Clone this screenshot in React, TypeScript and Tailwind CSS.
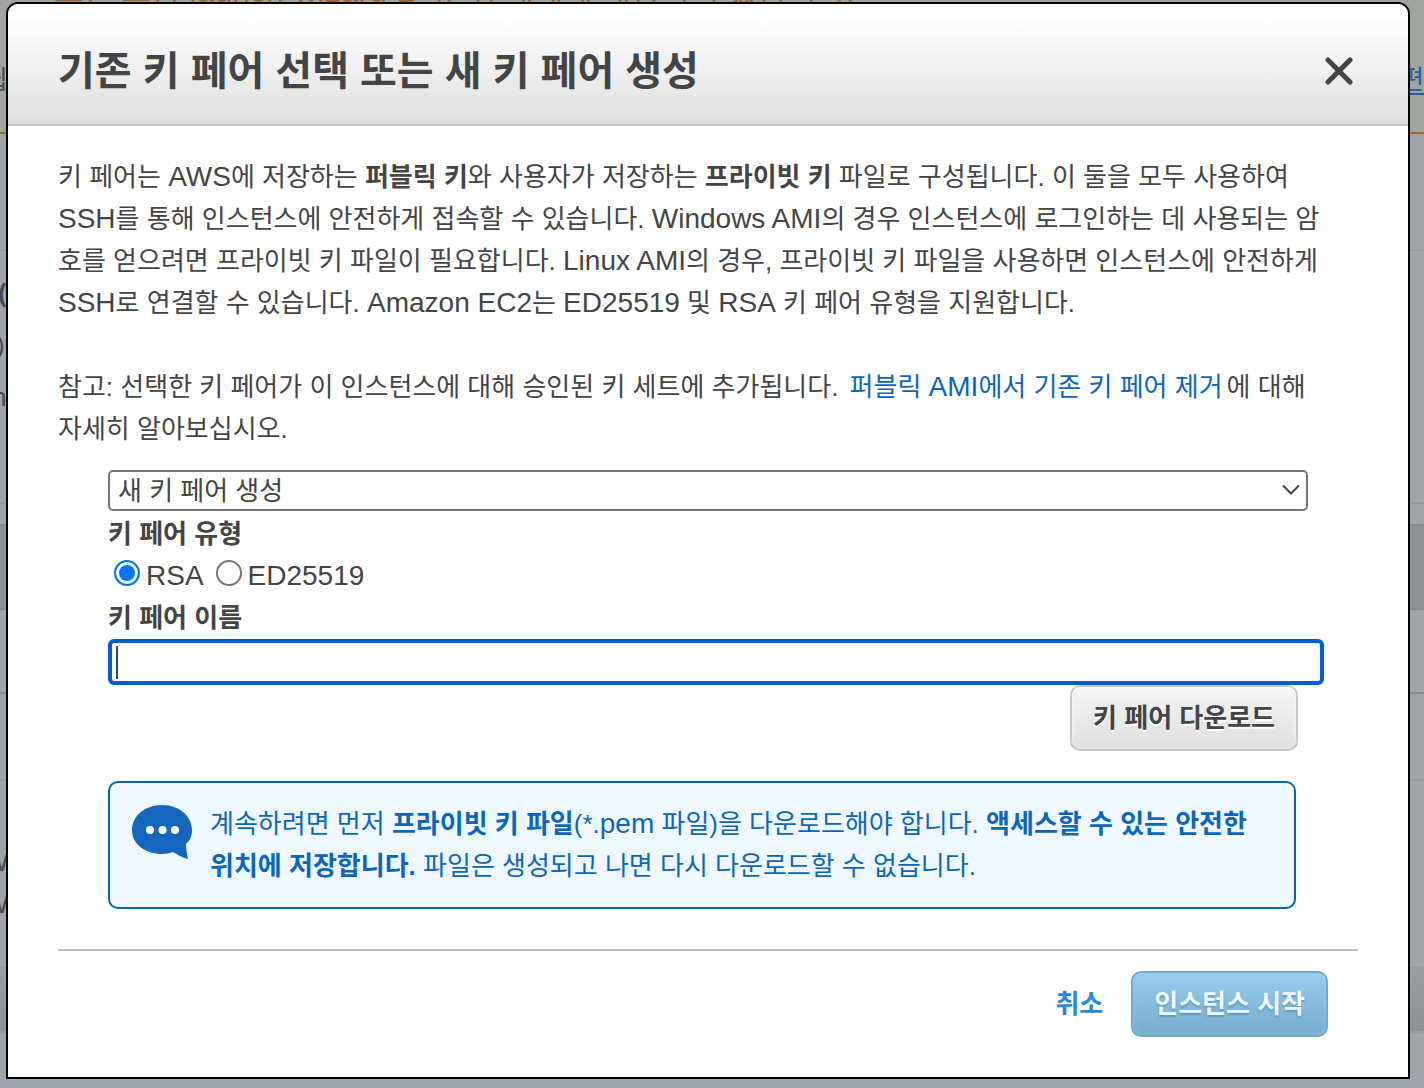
import { useState, FormEvent, ReactNode } from "react";

/* ─── Types ───────────────────────────────────────────────────────────────── */
type KeyType = "RSA" | "ED25519";

/* ─── Static data ─────────────────────────────────────────────────────────── */
const KEY_TYPES: KeyType[] = ["RSA", "ED25519"];

const KEY_OPTIONS = ["새 키 페어 생성", "기존 키 페어 선택", "키 페어 없이 계속"];

/* Latin words sit one step larger than the Hangul around them */
function En({ children }: { children: ReactNode }) {
  return <span className="text-[28px]">{children}</span>;
}

/* ─── Dimmed launch page behind the dialog ────────────────────────────────── */
function LaunchPage() {
  return (
    <div
      aria-hidden="true"
      className="col-start-1 row-start-1 flex min-h-screen flex-col overflow-hidden bg-[#a0a4ac] text-[26px] leading-[52px] text-[#454a50]"
    >
      <div className="relative h-[134px] shrink-0 border-b-2 border-[#9c6633] bg-[#a0a5a0]">
        <p className="absolute -top-[30px] left-[54px] text-[32px] leading-[42px] whitespace-nowrap text-[#9c6633]">
          보안 그룹 launch-wizard-2이(가) 세계에 개방되어 있습니다.
        </p>
        <span className="absolute top-[54px] -left-[16px]">쉽</span>
        <span className="absolute top-[54px] -right-[24px] text-[#225f9c] underline underline-offset-4">편집</span>
      </div>
      <div className="h-[117px] shrink-0 border-b-2 border-[#989ca4]" />
      <div className="h-[253px] shrink-0 overflow-hidden border-b-2 border-[#92979f] pt-[16px]">
        <p className="-ml-[2px] font-bold">(I</p>
        <p className="-ml-[4px]">),</p>
        <p className="-ml-[8px]">n</p>
      </div>
      <div className="h-[20px] shrink-0" />
      <div className="h-[86px] shrink-0 border-y-2 border-[#858a92] bg-[#8c939a]" />
      <div className="h-[84px] shrink-0 border-b-2 border-[#858a92]" />
      <div className="h-[87px] shrink-0 border-b-2 border-[#989ca4]" />
      <div className="h-[186px] shrink-0 pt-[60px] leading-[42px]">
        <p className="-ml-[16px]">W</p>
        <p className="-ml-[16px]">W</p>
      </div>
      <div className="h-[66px] shrink-0 border-b-2 border-[#989ca4] bg-linear-to-b from-[#989ca4] to-[#8c939a]" />
    </div>
  );
}

/* ─── Icons ───────────────────────────────────────────────────────────────── */
function CloseIcon() {
  return (
    <svg className="h-7 w-7" viewBox="0 0 28 28" fill="none" aria-hidden="true">
      <path d="M3 3l22 22M25 3L3 25" stroke="#444" strokeWidth="5" strokeLinecap="round" />
    </svg>
  );
}

function ChatIcon() {
  return (
    <svg className="mt-[2px] h-14 w-[60px] shrink-0" viewBox="0 0 60 56" aria-hidden="true">
      <path
        d="M30 0C47 0 60 11 60 25c0 6-2 10-6 14 0 5 1 10 2 15-5-1-10-4-15-7-3 1-7 2-11 2C13 49 0 39 0 25S13 0 30 0z"
        fill="#1566bd"
      />
      <circle cx="18" cy="25" r="4" fill="#fff" />
      <circle cx="30.500" cy="25" r="4" fill="#fff" />
      <circle cx="43" cy="25" r="4" fill="#fff" />
    </svg>
  );
}

/* ─── App ─────────────────────────────────────────────────────────────────── */
export default function App() {
  const [option, setOption] = useState<string>(KEY_OPTIONS[0]);
  const [keyType, setKeyType] = useState<KeyType>("RSA");
  const [name, setName] = useState<string>("");

  const handleSubmit = (e: FormEvent<HTMLFormElement>): void => {
    e.preventDefault();
  };

  return (
    <div className="grid grid-cols-1 overflow-hidden font-['Liberation_Sans','Noto_Sans_CJK_KR',sans-serif]">
      <LaunchPage />

      <div
        role="dialog"
        aria-modal="true"
        aria-labelledby="dialog-title"
        className="relative z-10 col-start-1 row-start-1 mt-[2px] mr-[14px] mb-[9px] ml-[6px] flex flex-col overflow-hidden rounded-t-xl border-2 border-black bg-white text-[26px] leading-[42px] text-[#444]"
      >
        {/* ── Header ── */}
        <header className="flex h-[122px] items-center justify-between border-b-2 border-[#c8c8c8] bg-linear-to-b from-white from-10% to-[#dfdfdf] pt-[14px] pr-[55px] pl-[50px]">
          <h1 id="dialog-title" className="text-[40px] leading-[56px] font-bold">
            기존 키 페어 선택 또는 새 키 페어 생성
          </h1>
          <button type="button" aria-label="닫기">
            <CloseIcon />
          </button>
        </header>

        <form onSubmit={handleSubmit} className="px-[50px] pt-[30px] pb-10">
          <p className="pr-6">
            키 페어는 <En>AWS</En>에 저장하는 <b>퍼블릭 키</b>와 사용자가 저장하는 <b>프라이빗 키</b> 파일로
            구성됩니다. 이 둘을 모두 사용하여 <En>SSH</En>를 통해 인스턴스에 안전하게 접속할 수 있습니다.{" "}
            <En>Windows AMI</En>의 경우 인스턴스에 로그인하는 데 사용되는 암호를 얻으려면 프라이빗 키 파일이
            필요합니다. <En>Linux AMI</En>의 경우, 프라이빗 키 파일을 사용하면 인스턴스에 안전하게{" "}
            <En>SSH</En>로 연결할 수 있습니다. <En>Amazon EC2</En>는 <En>ED25519</En> 및 <En>RSA</En> 키 페어
            유형을 지원합니다.
          </p>

          <p className="mt-[42px] pr-6">
            참고: 선택한 키 페어가 이 인스턴스에 대해 승인된 키 세트에 추가됩니다.{" "}
            <a href="#remove-keys" className="mx-1 text-[#0a66bc]">
              퍼블릭 <En>AMI</En>에서 기존 키 페어 제거
            </a>
            에 대해 자세히 알아보십시오.
          </p>

          {/* ── Key pair fields ── */}
          <div className="mt-5 pr-[34px] pl-[50px]">
            <div className="relative mr-4">
              <select
                aria-label="키 페어 옵션"
                value={option}
                onChange={(e) => setOption(e.target.value)}
                className="block h-[41px] w-full appearance-none rounded-[5px] border-2 border-[#767676] bg-white px-2 leading-[36px]"
              >
                {KEY_OPTIONS.map((o) => (
                  <option key={o}>{o}</option>
                ))}
              </select>
              <svg
                className="pointer-events-none absolute top-[14px] right-2 h-3 w-[18px]"
                viewBox="0 0 18 12"
                fill="none"
                aria-hidden="true"
              >
                <path d="M1 1.500l8 8 8-8" stroke="#444" strokeWidth="2" />
              </svg>
            </div>

            <fieldset className="mt-[2px]">
              <legend className="font-bold">키 페어 유형</legend>
              <div className="flex gap-3 pl-[6px] text-[28px]">
                {KEY_TYPES.map((type) => (
                  <label key={type} className="flex gap-[6px]">
                    <input
                      type="radio"
                      name="key-type"
                      value={type}
                      checked={keyType === type}
                      onChange={() => setKeyType(type)}
                      className="mt-[5px] h-[26px] w-[26px] appearance-none rounded-full border-2 border-[#767676] bg-white checked:border-[#0075ff] checked:bg-[#0075ff] checked:shadow-[inset_0_0_0_3px_white]"
                    />
                    <span>{type}</span>
                  </label>
                ))}
              </div>
            </fieldset>

            <label htmlFor="key-name" className="block font-bold">
              키 페어 이름
            </label>
            <div className="relative">
              <input
                id="key-name"
                type="text"
                value={name}
                onChange={(e) => setName(e.target.value)}
                className="block h-[46px] w-full rounded-md border-4 border-[#005fcc] bg-white px-1 caret-transparent outline-none"
              />
              {name === "" && <span className="absolute top-[7px] left-2 h-[33px] w-[2px] bg-[#444]" />}
            </div>

            <div className="flex justify-end pr-[26px]">
              <button
                type="button"
                className="h-[66px] rounded-[10px] border-2 border-[#c8c8c8] bg-linear-to-b from-[#f5f5f5] to-[#dfdfdf] px-[21px] font-bold shadow-[inset_0_0_4px_rgba(255,255,255,0.7)] [text-shadow:0_2px_0_white]"
              >
                키 페어 다운로드
              </button>
            </div>

            {/* ── Info box ── */}
            <div className="mt-[30px] mr-7 flex gap-[18px] rounded-[10px] border-2 border-[#0066b3] bg-[#f0f8ff] px-[22px] py-5 text-[#0a66bc]">
              <ChatIcon />
              <p>
                계속하려면 먼저 <b>프라이빗 키 파일</b>(*.<En>pem</En> 파일)을 다운로드해야 합니다.{" "}
                <b>액세스할 수 있는 안전한 위치에 저장합니다.</b> 파일은 생성되고 나면 다시 다운로드할 수
                없습니다.
              </p>
            </div>
          </div>

          {/* ── Footer ── */}
          <footer className="mt-10 flex items-center justify-end gap-7 border-t-2 border-[#bbb] pt-5 pr-[30px] font-bold">
            <button type="button" className="text-[#2a87de]">
              취소
            </button>
            <button
              type="submit"
              className="h-[66px] rounded-[10px] border-2 border-[#74a9cb] bg-linear-to-b from-[#99cdee] to-[#76abcc] px-[21px] text-[#f0f8ff] shadow-[inset_0_0_4px_rgba(160,210,240,0.7)] [text-shadow:0_2px_2px_rgba(60,120,160,0.5)]"
            >
              인스턴스 시작
            </button>
          </footer>
        </form>
      </div>
    </div>
  );
}
